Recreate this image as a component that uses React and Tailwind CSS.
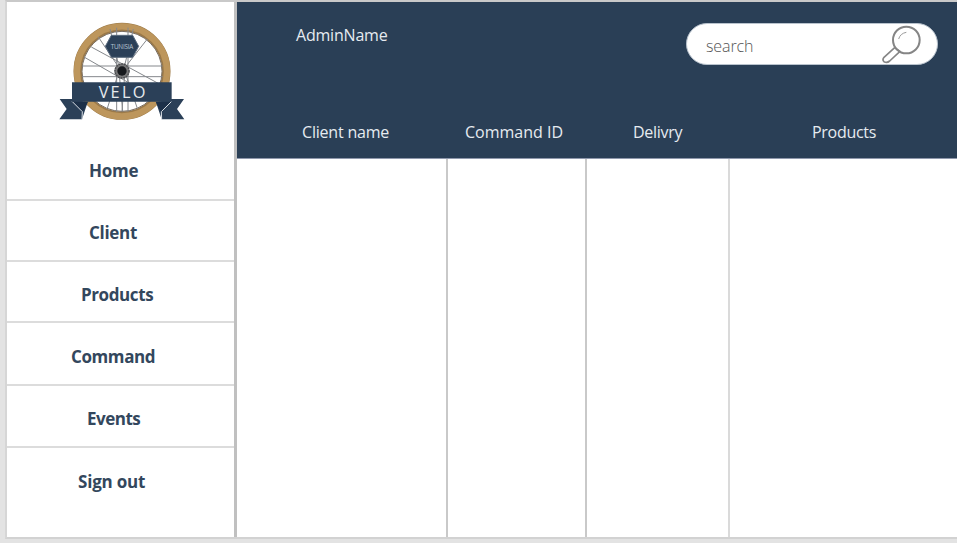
const navItems = [
  { label: 'Home', row: 'h-[62px] pl-[82px] pt-[3px]', text: 'tracking-[-0.25px]' },
  { label: 'Client', row: 'h-[61px] pl-[82px] pt-1', text: 'tracking-[-0.3px]' },
  { label: 'Products', row: 'h-[61px] pl-[74px] pt-1.5', text: 'tracking-[-0.4px]' },
  { label: 'Command', row: 'h-[63px] pl-[64px] pt-1.5', text: 'tracking-[-0.4px]' },
  { label: 'Events', row: 'h-[62px] pl-[80px] pt-1.5', text: 'tracking-[-0.5px]' },
];

const columns = [
  { label: 'Client name', cell: 'w-[211px] pl-[65px] tracking-[-0.2px]', body: 'w-[211px] border-r-2 border-[#c9c9c9]' },
  { label: 'Command ID', cell: 'w-[139px] pl-[17px]', body: 'w-[139px] border-r-2 border-[#c9c9c9]' },
  { label: 'Delivry', cell: 'w-[142px] pl-[46px] tracking-[-0.3px]', body: 'w-[143px] border-r-2 border-[#dadada]' },
  { label: 'Products', cell: 'flex-1 pl-[83px] tracking-[-0.3px]', body: 'flex-1' },
];

const spokes = [
  [180, 42, 208, 160], [200, 38, 200, 290], [234, 38, 234, 290], [250, 42, 222, 160],
  [145, 66, 205, 155], [292, 72, 226, 156], [124, 96, 330, 208], [102, 126, 300, 240],
  [96, 153, 338, 153], [96, 185, 338, 185], [205, 175, 172, 280], [226, 175, 262, 280],
  [208, 180, 218, 288], [224, 180, 216, 288],
];

function Logo() {
  return (
    <svg className="h-[110px] w-[145px]" viewBox="0 0 435 330" aria-label="Velo Tunisia">
      <circle cx="216" cy="169" r="133" fill="none" stroke="#9b7948" strokeWidth="25" />
      <circle cx="216" cy="169" r="135" fill="none" stroke="#bd965c" strokeWidth="19" />
      <circle cx="216" cy="169" r="120" fill="none" stroke="#776c60" strokeWidth="3" />
      {spokes.map(([x1, y1, x2, y2], i) => (
        <line key={i} x1={x1} y1={y1} x2={x2} y2={y2} stroke="#85888c" strokeWidth="3" />
      ))}
      <circle cx="216" cy="168" r="23" fill="#777778" />
      <circle cx="216" cy="168" r="21" fill="none" stroke="#4b4c50" strokeWidth="4" strokeDasharray="5 3" />
      <circle cx="216" cy="168" r="14" fill="#17191d" />
      <path d="M184 61H248L266 94L248 127H184L166 94Z" fill="#2b4058" stroke="#5b6b7e" strokeWidth="3" />
      <text x="216" y="101" fill="#b8c5d3" fontFamily="Open Sans, sans-serif" fontSize="19" textAnchor="middle" textLength="68">TUNISIA</text>
      <path d="M68 252H29L50 282L28 313H96L113 262Z" fill="#2b4058" />
      <path d="M363 252H402L381 282L403 313H335L318 262Z" fill="#2b4058" />
      <path d="M67 259L98 290L114 260ZM364 259L333 290L317 260Z" fill="#1c3049" />
      <path d="M66 259L97 290L96 313M365 259L334 290L335 313" fill="none" stroke="#d9dee4" strokeWidth="3" />
      <path d="M66 202H365V260H66Z" fill="#2b4058" />
      <text x="216" y="249" fill="#e6eaee" fontFamily="Open Sans, sans-serif" fontSize="49" fontWeight="500" textAnchor="middle" textLength="140">VELO</text>
    </svg>
  );
}

function SearchIcon() {
  return (
    <svg className="mt-0.5 h-[40px] w-[40px]" viewBox="0 0 120 120" fill="none" stroke="#858585" strokeWidth="5">
      <circle cx="76" cy="45" r="40" strokeWidth="6" />
      <path d="M53 42Q58 25 76 22" strokeWidth="3" stroke="#999999" />
      <path d="M41 68L9 97Q3 105 9 110Q18 115 26 108L57 79M41 68L57 79" strokeLinejoin="round" />
    </svg>
  );
}

export default function App() {
  return (
    <div className="flex h-[543px] w-[957px] flex-col overflow-hidden bg-[#e3e3e3] pl-[5px] font-['Open_Sans','Noto_Sans',sans-serif]">
      <div className="flex h-[539px] border-y-2 border-l-2 border-b-[#d2d2d2] border-l-[#d6d6d6] border-t-[#c9c9c9] bg-white">
        <aside className="flex w-[230px] shrink-0 flex-col border-r-[3px] border-[#c0c0c0]">
          <div className="flex h-[137px] pl-[43px] pt-[13px]">
            <Logo />
          </div>
          <nav className="flex flex-col text-[17px] font-bold leading-6 text-[#33475d]">
            {navItems.map((item) => (
              <a key={item.label} className={`flex items-center whitespace-nowrap border-b-2 border-[#dcdcdc] ${item.row}`}>
                <span className={item.text}>{item.label}</span>
              </a>
            ))}
            <a className="flex h-[68px] items-center whitespace-nowrap pl-[71px] tracking-[-0.2px]">
              <span>Sign out</span>
            </a>
          </nav>
        </aside>
        <main className="flex min-w-0 flex-1 flex-col">
          <header className="flex h-[157px] shrink-0 flex-col justify-between border-b border-[#8f98ac] bg-[#2a3f56] text-[16px] leading-6 text-[#e6ebf0]">
            <div className="flex items-start justify-between pl-[59px] pr-[19px] pt-[21px]">
              <span className="tracking-[-0.2px]">AdminName</span>
              <div className="flex h-[42px] w-[252px] items-center justify-between rounded-full border border-[#b9c3cd] bg-white pl-[19px] pr-[16px] text-[#555555]">
                <span className="pt-1 tracking-[-0.1px] font-light">search</span>
                <SearchIcon />
              </div>
            </div>
            <div className="flex pb-[14px]">
              {columns.map((column) => (
                <div key={column.label} className={`whitespace-nowrap ${column.cell}`}>{column.label}</div>
              ))}
            </div>
          </header>
          <section className="flex flex-1">
            {columns.map((column) => (
              <div key={column.label} className={column.body} />
            ))}
          </section>
        </main>
      </div>
    </div>
  );
}
